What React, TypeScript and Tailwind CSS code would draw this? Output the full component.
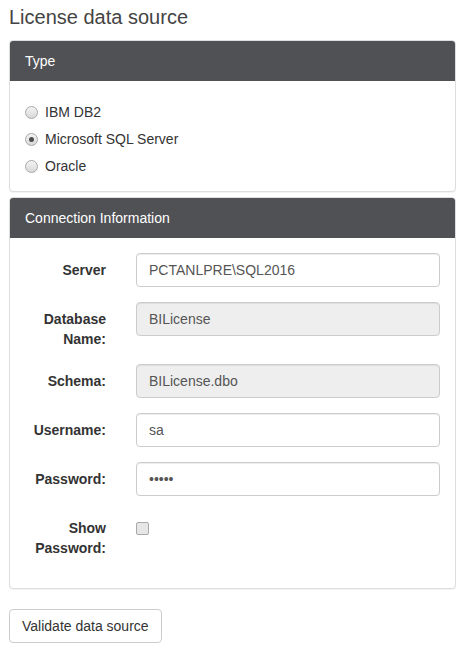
import React, { useState } from "react";

const font = { fontFamily: '"Liberation Sans", Arial, sans-serif' };

const Radio = ({ checked, label, onClick }: { checked: boolean; label: string; onClick: () => void }) => (
  <label onClick={onClick} className="flex h-[27px] items-center cursor-pointer">
    <span className="flex h-[13px] w-[13px] items-center justify-center rounded-full border border-[#a9a9a9] bg-gradient-to-b from-[#f4f4f4] to-[#d8d8d8]">
      {checked && <span className="h-[5px] w-[5px] rounded-full bg-[#4d4d4d]" />}
    </span>
    <span className="ml-[7px] text-[14px] text-[#333]">{label}</span>
  </label>
);

const Field = ({
  label,
  value,
  disabled,
  type = "text",
}: {
  label: string;
  value: string;
  disabled?: boolean;
  type?: string;
}) => (
  <div className="mb-[15px] flex">
    <div className="w-[81px] shrink-0 pt-[7px] text-right text-[14px] font-bold leading-5 text-[#333]">{label}</div>
    <div className="ml-[30px] flex-1">
      <input
        type={type}
        defaultValue={value}
        disabled={disabled}
        className={
          "h-[34px] w-full rounded-[4px] border border-[#ccc] px-[12px] text-[14px] text-[#555] outline-none shadow-[inset_0_1px_1px_rgba(0,0,0,0.075)] " +
          (disabled ? "bg-[#eee]" : "bg-white")
        }
        style={font}
      />
    </div>
  </div>
);

export default function App() {
  const [dbType, setDbType] = useState("mssql");
  const [show, setShow] = useState(false);

  return (
    <div className="min-h-screen bg-white pl-[9px] pr-[12px]" style={font}>
      <h3 className="pt-[6px] text-[20px] leading-[22px] text-[#444]">License data source</h3>

      <div className="mt-[12px] rounded-[4px] border border-[#ddd] bg-white shadow-[0_1px_1px_rgba(0,0,0,0.05)]">
        <div className="flex h-[40px] items-center rounded-t-[3px] bg-[#505155] px-[15px] text-[14px] text-white">Type</div>
        <div className="px-[15px] pt-[18px] pb-[11px]">
          <Radio checked={dbType === "db2"} label="IBM DB2" onClick={() => setDbType("db2")} />
          <Radio checked={dbType === "mssql"} label="Microsoft SQL Server" onClick={() => setDbType("mssql")} />
          <Radio checked={dbType === "oracle"} label="Oracle" onClick={() => setDbType("oracle")} />
        </div>
      </div>

      <div className="mt-[5px] rounded-[4px] border border-[#ddd] bg-white shadow-[0_1px_1px_rgba(0,0,0,0.05)]">
        <div className="flex h-[40px] items-center rounded-t-[3px] bg-[#505155] px-[15px] text-[14px] text-white">
          Connection Information
        </div>
        <div className="px-[15px] pt-[15px] pb-[15px]">
          <Field label="Server" value="PCTANLPRE\SQL2016" />
          <Field label="Database Name:" value="BILicense" disabled />
          <Field label="Schema:" value="BILicense.dbo" disabled />
          <Field label="Username:" value="sa" />
          <Field label="Password:" value="admin" type={show ? "text" : "password"} />
          <div className="mb-[15px] flex">
            <div className="w-[81px] shrink-0 pt-[7px] text-right text-[14px] font-bold leading-5 text-[#333]">
              Show Password:
            </div>
            <div className="ml-[30px] flex-1 pt-[11px]">
              <span
                onClick={() => setShow(!show)}
                className="flex h-[13px] w-[13px] cursor-pointer items-center justify-center rounded-[2px] border border-[#a9a9a9] bg-[#e6e6e6]"
              >
                {show && <span className="text-[10px] leading-none text-[#333]">✓</span>}
              </span>
            </div>
          </div>
        </div>
      </div>

      <button className="mt-[20px] h-[34px] rounded-[4px] border border-[#ccc] bg-white px-[12px] text-[14px] text-[#333]">
        Validate data source
      </button>
    </div>
  );
}
